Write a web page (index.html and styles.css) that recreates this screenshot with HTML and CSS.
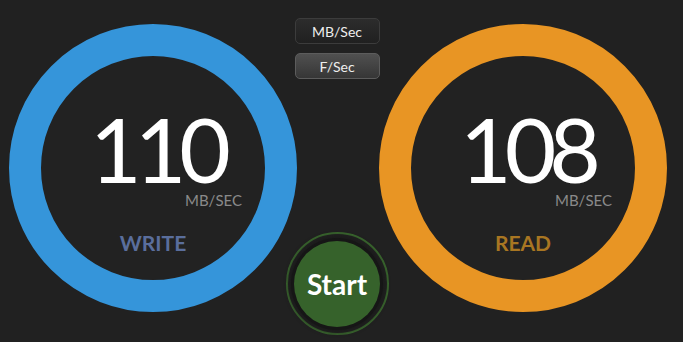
FILE: index.html
```html
<!DOCTYPE html>
<html>
<head>
<meta charset="utf-8">
<title>Speed Test</title>
<link rel="stylesheet" href="styles.css">
</head>
<body>
	<div class="panel">
		<div class="gauge gauge-write">
			<div class="value">110</div>
			<div class="unit">MB/SEC</div>
			<div class="label">WRITE</div>
		</div>
		<div class="middle">
			<div class="units">
				<button class="unit-btn">MB/Sec</button>
				<button class="unit-btn active">F/Sec</button>
			</div>
			<div class="start">
				<div class="start-inner">Start</div>
			</div>
		</div>
		<div class="gauge gauge-read">
			<div class="value">108</div>
			<div class="unit">MB/SEC</div>
			<div class="label">READ</div>
		</div>
	</div>
</body>
</html>
```

FILE: styles.css
```css
* {
	box-sizing: border-box;
}

html, body {
	margin: 0;
	padding: 0;
	height: 100%;
}

body {
	background: #212121;
	font-family: Lato, "Open Sans", sans-serif;
	color: #fff;
	overflow: hidden;
}

.panel {
	display: flex;
	align-items: flex-start;
	padding-left: 9px;
	height: 342px;
}

.gauge {
	width: 288px;
	height: 288px;
	margin-top: 24px;
	border-radius: 50%;
	border: 32px solid #3595da;
	background: #222;
	display: flex;
	flex-direction: column;
	align-items: center;
	padding-top: 53px;
}

.gauge-read {
	border-color: #e89524;
}

.value {
	font-size: 89px;
	line-height: 80px;
	letter-spacing: -7px;
	padding-left: 8px;
	font-weight: 400;
}

.unit {
	align-self: flex-end;
	margin-right: 23px;
	margin-top: 2px;
	font-size: 15px;
	line-height: 18px;
	color: #8a8a8a;
}

.label {
	margin-top: 22px;
	font-size: 21px;
	line-height: 24px;
	font-weight: 700;
	color: #5a6e9c;
}

.gauge-read .label {
	color: #a87622;
}

.middle {
	width: 82px;
	height: 342px;
	display: flex;
	flex-direction: column;
	align-items: center;
	justify-content: space-between;
}

.units {
	display: flex;
	flex-direction: column;
	gap: 9px;
	margin-top: 18px;
	margin-left: -2px;
}

.unit-btn {
	width: 85px;
	height: 26px;
	border-radius: 5px;
	border: 1px solid #3c3c3c;
	background: linear-gradient(#2c2c2c, #202020);
	color: #eee;
	font-family: Lato, "Open Sans", sans-serif;
	font-size: 14px;
	padding: 0;
}

.unit-btn.active {
	border-color: #5c5c5c;
	background: linear-gradient(#505050, #363636);
}

.start {
	width: 103px;
	height: 103px;
	margin-bottom: 7px;
	margin-left: -2px;
	border-radius: 50%;
	border: 2px solid #3a682e;
	display: flex;
	align-items: center;
	justify-content: center;
}

.start-inner {
	width: 86px;
	height: 86px;
	border-radius: 50%;
	background: #36622b;
	box-shadow: 0 0 0 3px #161616, 0 0 5px 5px #1a1a1a;
	display: flex;
	align-items: center;
	justify-content: center;
	font-size: 28px;
	font-weight: 700;
	color: #fff;
}
```
